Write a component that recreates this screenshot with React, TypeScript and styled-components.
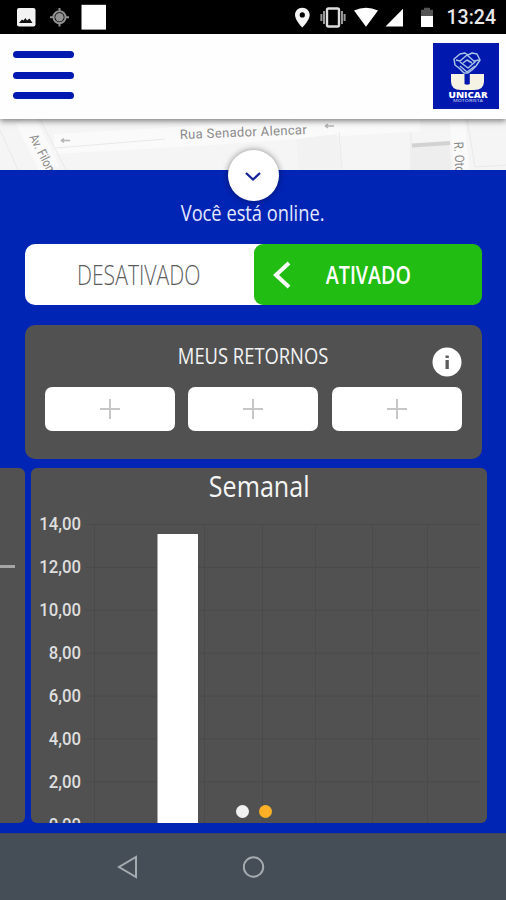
import React from 'react';
import styled, { createGlobalStyle } from 'styled-components';

const BLUE = '#0024b4';
const PANEL = '#515151';

const GlobalStyle = createGlobalStyle`
  *, *::before, *::after { box-sizing: border-box; }
  body { margin: 0; font-family: Roboto, "Liberation Sans", sans-serif; background: ${BLUE}; }
  button { border: 0; padding: 0; margin: 0; font: inherit; color: inherit; background: none; }
  svg { display: block; flex: none; }
`;

const Screen = styled.div`
  width: 506px;
  height: 900px;
  display: flex;
  flex-direction: column;
  overflow: hidden;
  background: ${BLUE};
`;

const StatusBar = styled.div`
  height: 34px;
  flex: none;
  background: #000;
  color: #fff;
  display: flex;
  justify-content: space-between;
  align-items: center;
  padding-right: 10px;
`;

const Clock = styled.span`
  font-size: 19.5px;
  font-weight: 500;
  line-height: 34px;
  padding-top: 2px;
  color: #e8e8e8;
`;

const StatusRight = styled.div`
  display: flex;
  align-items: center;
  gap: 12px;
`;

const Header = styled.header`
  height: 85px;
  flex: none;
  display: flex;
  justify-content: space-between;
  align-items: flex-start;
  padding: 9px 7px 0 13px;
  background: #fefefe;
  box-shadow: 0 2px 6px rgba(0, 0, 0, 0.5);
  position: relative;
  z-index: 1;
`;

const MenuButton = styled.button`
  width: 62px;
  height: 48px;
  margin-top: 8px;
  display: flex;
  flex-direction: column;
  justify-content: space-between;
`;

const MenuLine = styled.span`
  width: 61px;
  height: 7px;
  border-radius: 4px;
  background: #0019b0;
`;

const MapStrip = styled.div`
  height: 51px;
  flex: none;
  overflow: hidden;
`;

const Main = styled.main`
  height: 663px;
  flex: none;
  display: flex;
  flex-direction: column;
  align-items: center;
  color: #fff;
`;

const CollapseButton = styled.button`
  width: 51px;
  height: 51px;
  margin-top: -20px;
  flex: none;
  border-radius: 50%;
  background: #fff;
  display: flex;
  align-items: center;
  justify-content: center;
  box-shadow: 0 0 6px rgba(0, 0, 0, 0.45);
  position: relative;
`;

const Narrow = styled.span<{ $size: number; $scale: number; $weight?: number }>`
  display: inline-block;
  white-space: nowrap;
  font-family: "Open Sans", Roboto, sans-serif;
  font-size: ${(p) => p.$size}px;
  font-weight: ${(p) => p.$weight ?? 400};
  transform: scaleX(${(p) => p.$scale});
`;

const StatusText = styled.p`
  margin: 0;
  height: 43px;
  line-height: 25px;
  color: #e4eaff;
`;

const Toggle = styled.div`
  width: 457px;
  height: 61px;
  flex: none;
  display: grid;
  grid-template-columns: 229px 228px;
  border-radius: 10px;
  background: linear-gradient(90deg, #fff 60%, transparent 60%);
`;

const ToggleOption = styled.button<{ $active?: boolean }>`
  display: grid;
  grid-template-columns: ${(p) => (p.$active ? '57px 115px' : '1fr')};
  align-items: center;
  justify-items: center;
  line-height: 61px;
  border-radius: 9px;
  color: ${(p) => (p.$active ? '#fff' : '#5c5c5c')};
  background: ${(p) => (p.$active ? '#22bd12' : 'transparent')};
`;

const Returns = styled.section`
  width: 457px;
  height: 134px;
  margin-top: 20px;
  flex: none;
  border-radius: 10px;
  background: ${PANEL};
  padding: 0 20px;
`;

const ReturnsHeader = styled.div`
  height: 62px;
  display: grid;
  grid-template-columns: 1fr auto 1fr;
  line-height: 60px;
  color: #f4f4f4;
`;

const InfoButton = styled.button`
  grid-column: 3;
  justify-self: end;
  margin-top: 22px;
  width: 30px;
  height: 30px;
`;

const Slots = styled.div`
  display: grid;
  grid-template-columns: repeat(3, 130px);
  justify-content: space-between;
`;

const Slot = styled.button`
  height: 44px;
  border-radius: 7px;
  background: #fff;
  display: flex;
  align-items: center;
  justify-content: center;
`;

const Carousel = styled.div`
  width: 506px;
  height: 355px;
  margin-top: 9px;
  flex: none;
  display: flex;
  gap: 6px;
`;

const PreviousCard = styled.div`
  width: 25px;
  border-radius: 0 6px 6px 0;
  background: ${PANEL};
  padding-top: 97px;
`;

const AxisStub = styled.div`
  width: 15px;
  height: 3px;
  background: #a5a5a5;
`;

const WeekCard = styled.section`
  width: 456px;
  border-radius: 6px;
  overflow: hidden;
  background: ${PANEL};
  position: relative;
`;

const CardTitle = styled.h2`
  margin: 0;
  height: 34px;
  padding-top: 2px;
  line-height: 32px;
  text-align: center;
  color: #f5f5f5;
`;

const ChartArea = styled.div`
  display: flex;
  height: 321px;
  overflow: hidden;
`;

const AxisLabels = styled.div`
  width: 50px;
  flex: none;
  text-align: right;
`;

const AxisLabel = styled.div`
  height: 43px;
  line-height: 43px;
  font-size: 18px;
  transform: scaleX(0.93);
  transform-origin: right;
  font-weight: 500;
  color: #dedede;
`;

const Dots = styled.div`
  position: absolute;
  left: 205px;
  bottom: 5px;
  display: flex;
  gap: 10px;
`;

const Dot = styled.span<{ $active?: boolean }>`
  width: 13px;
  height: 13px;
  border-radius: 50%;
  background: ${(p) => (p.$active ? '#ffb027' : '#f1f1f1')};
`;

const NavBar = styled.nav`
  height: 67px;
  flex: none;
  background: #454d56;
  border-top: 1px solid #3b4460;
  display: grid;
  grid-template-columns: 117px 126px auto;
  align-items: center;
`;

const BackIcon = styled.svg`
  grid-column: 2;
`;

const LeftStatusIcons = () => (
  <svg width="120" height="34" viewBox="0 0 120 34">
    <rect x="17" y="8" width="18.5" height="18.5" rx="2" fill="#f3f3f3" />
    <path d="M19 23l3-3.500 1.500 1 2-2.500 1.500 2.500 2.500-2 3 4.500z" fill="#111" />
    <g fill="none" stroke="#929292">
      <circle cx="59.5" cy="17.2" r="6" strokeWidth="2" />
      <path d="M59.5 8v4M59.5 22.500v4M50 17.200h4M65 17.200h4" strokeWidth="2" />
    </g>
    <circle cx="59.500" cy="17.200" r="4.200" fill="#929292" />
    <rect x="81.500" y="4.800" width="24.500" height="24.800" fill="#fff" />
  </svg>
);

const RightStatusIcons = () => (
  <svg width="143" height="34" viewBox="290 0 143 34">
    <path fillRule="evenodd" d="M300.300 7.800c-4.200 0-7.300 3.200-7.300 7.200 0 5.200 7.300 12.500 7.300 12.500s7.400-7.300 7.400-12.500c0-4-3.200-7.200-7.400-7.200zm0 4.500a2.600 2.600 0 1 1 0 5.200 2.600 2.600 0 0 1 0-5.200z" fill="#f4f4f4" />
    <rect x="325" y="8.500" width="12" height="18" rx="1.500" fill="none" stroke="#ddd" strokeWidth="2.400" />
    <path d="M322 11v13M340 11v13M319.400 14v7M342.600 14v7" stroke="#999" strokeWidth="2" />
    <path d="M352 10.500q12-5.500 24 0L364 26.800z" fill="#fff" />
    <path d="M383.500 26.500h17.500V8.800z" fill="#fff" />
    <path d="M422 7.800h6v2h3v6.700h-12V9.800h3z" fill="#555" />
    <path d="M419 16h12v11h-12z" fill="#fff" />
  </svg>
);

const BrandLogo = () => (
  <svg width="66" height="66" viewBox="0 0 66 66">
    <rect width="66" height="66" fill="#0018ad" />
    <g fill="none" stroke="#a9c3e4" strokeWidth="1.500" strokeLinejoin="round">
      <path d="M27 11l5-1 3 2 4-2 5 1 3 6-4 6-4 4-4 3h-4l-5-5-4-3-1-6z" />
      <path d="M23 17l4 1 7-6 8 7-7 6-8-6M46 17l-5 1M27 23l7 6 8-6M30 20l4-3 5 3" />
    </g>
    <path d="M18 31h13.500v10q2.700 1.500 5.300 0V31H51v7.500Q51 47 41 47H28q-10 0-10-8.500z" fill="#f5f3e3" />
    <text x="15.500" y="54.500" fontFamily="Open Sans, sans-serif" fontWeight="800" fontSize="8.500" fill="#fff" textLength="39" lengthAdjust="spacingAndGlyphs">UNICAR</text>
    <text x="20" y="58.500" fontFamily="Open Sans, sans-serif" fontWeight="600" fontSize="4" fill="#a9bcec" textLength="30" lengthAdjust="spacingAndGlyphs">MOTORISTA</text>
  </svg>
);

const StreetMap = () => (
  <svg width="506" height="51" viewBox="0 119 506 51" fontFamily="Roboto, sans-serif">
    <rect y="119" width="506" height="51" fill="#f5f5f6" />
    <path d="M25 119L50 170M54 144L180 137 420 121" fill="none" stroke="#fafafa" strokeWidth="20" />
    <path d="M457 119L462 170" stroke="#fafafa" strokeWidth="15" />
    <path d="M0 130L18 170M40 119L66 170M56 148L165 139M339 132L342 170M411 132V170M467 119L475 167 506 165" fill="none" stroke="#e9e9ea" />
    <path d="M296 139L337 134 342 170H299z" fill="#f2f2f3" />
    <path d="M412 147L449 144 452 170H411z" fill="#eeeeef" />
    <path d="M412 145.500L450 143" stroke="#d2d2d3" strokeWidth="4" />
    <path d="M61 140.500h9M61 140.500l3-2M61 140.500l3 2M325 126h9M325 126l3-2M325 126l3 2" fill="none" stroke="#b5b5b5" strokeWidth="1.500" />
    <text x="180" y="139" transform="rotate(-2.200 180 139)" fontSize="13" fill="#8a8a8a" textLength="127">Rua Senador Alencar</text>
    <text x="29" y="137" transform="rotate(63 29 137)" fontSize="13" fill="#8a8a8a" textLength="44" lengthAdjust="spacingAndGlyphs">Av. Filom</text>
    <text x="454" y="142" transform="rotate(87 454 142)" fontSize="13" fill="#8a8a8a" textLength="31" lengthAdjust="spacingAndGlyphs">R. Oto</text>
  </svg>
);

const PlusIcon = () => (
  <svg width="20" height="20" viewBox="0 0 20 20">
    <path d="M10 0v20M0 10h20" stroke="#c7c7c7" strokeWidth="2" />
  </svg>
);

const ticks = ['14,00', '12,00', '10,00', '8,00', '6,00', '4,00', '2,00', '0,00'];
const columns = [13, 123, 181, 234, 291, 346];

const WeekChart = () => (
  <svg width="406" height="321" viewBox="0 0 406 321">
    <g stroke="#4a4a4a">
      {ticks.map((tick, i) => <path key={tick} d={`M5 ${22.5 + i * 42.9}H399`} />)}
      {columns.map((x) => <path key={x} d={`M${x + 0.5} 24V321`} />)}
    </g>
    <rect x="76.500" y="32" width="40.500" height="289" fill="#fff" />
  </svg>
);

export default function App() {
  return (
    <Screen>
      <GlobalStyle />
      <StatusBar>
        <LeftStatusIcons />
        <StatusRight>
          <RightStatusIcons />
          <Clock>13:24</Clock>
        </StatusRight>
      </StatusBar>
      <Header>
        <MenuButton aria-label="Menu">
          <MenuLine /><MenuLine /><MenuLine />
        </MenuButton>
        <BrandLogo />
      </Header>
      <MapStrip><StreetMap /></MapStrip>
      <Main>
        <CollapseButton aria-label="Recolher">
          <svg width="18" height="12" viewBox="0 0 18 12">
            <path d="M2 3l7 6.500L16 3" fill="none" stroke="#13209a" strokeWidth="2.300" />
          </svg>
        </CollapseButton>
        <StatusText><Narrow $size={21} $scale={0.87}>Você está online.</Narrow></StatusText>
        <Toggle>
          <ToggleOption><Narrow $size={27} $scale={0.785} $weight={300}>DESATIVADO</Narrow></ToggleOption>
          <ToggleOption $active>
            <svg width="20" height="28" viewBox="0 0 20 28">
              <path d="M17 2L4 14l13 12" fill="none" stroke="#fff" strokeWidth="4" />
            </svg>
            <Narrow $size={26} $scale={0.755} $weight={600}>ATIVADO</Narrow>
          </ToggleOption>
        </Toggle>
        <Returns>
          <ReturnsHeader>
            <span />
            <Narrow $size={22} $scale={0.835}>MEUS RETORNOS</Narrow>
            <InfoButton aria-label="Informações">
              <svg width="30" height="30" viewBox="0 0 30 30">
                <circle cx="15" cy="15" r="14.500" fill="#fff" />
                <path d="M13.500 8.500h3.300v2.500h-3.300zM13.500 13h3.300v9h-3.300z" fill="#5c5c5c" />
              </svg>
            </InfoButton>
          </ReturnsHeader>
          <Slots>
            {[0, 1, 2].map((i) => <Slot key={i} aria-label="Adicionar"><PlusIcon /></Slot>)}
          </Slots>
        </Returns>
        <Carousel>
          <PreviousCard><AxisStub /></PreviousCard>
          <WeekCard>
            <CardTitle><Narrow $size={28.5} $scale={0.88}>Semanal</Narrow></CardTitle>
            <ChartArea>
              <AxisLabels>{ticks.map((t) => <AxisLabel key={t}>{t}</AxisLabel>)}</AxisLabels>
              <WeekChart />
            </ChartArea>
            <Dots><Dot /><Dot $active /></Dots>
          </WeekCard>
        </Carousel>
      </Main>
      <NavBar>
        <BackIcon width="22" height="24" viewBox="0 0 22 24">
          <path d="M19 2v20L2 12z" fill="none" stroke="#a5acb0" strokeWidth="2" />
        </BackIcon>
        <svg width="22" height="22" viewBox="0 0 22 22">
          <circle cx="10.500" cy="11" r="9.700" fill="none" stroke="#a5acb0" strokeWidth="2" />
        </svg>
      </NavBar>
    </Screen>
  );
}
